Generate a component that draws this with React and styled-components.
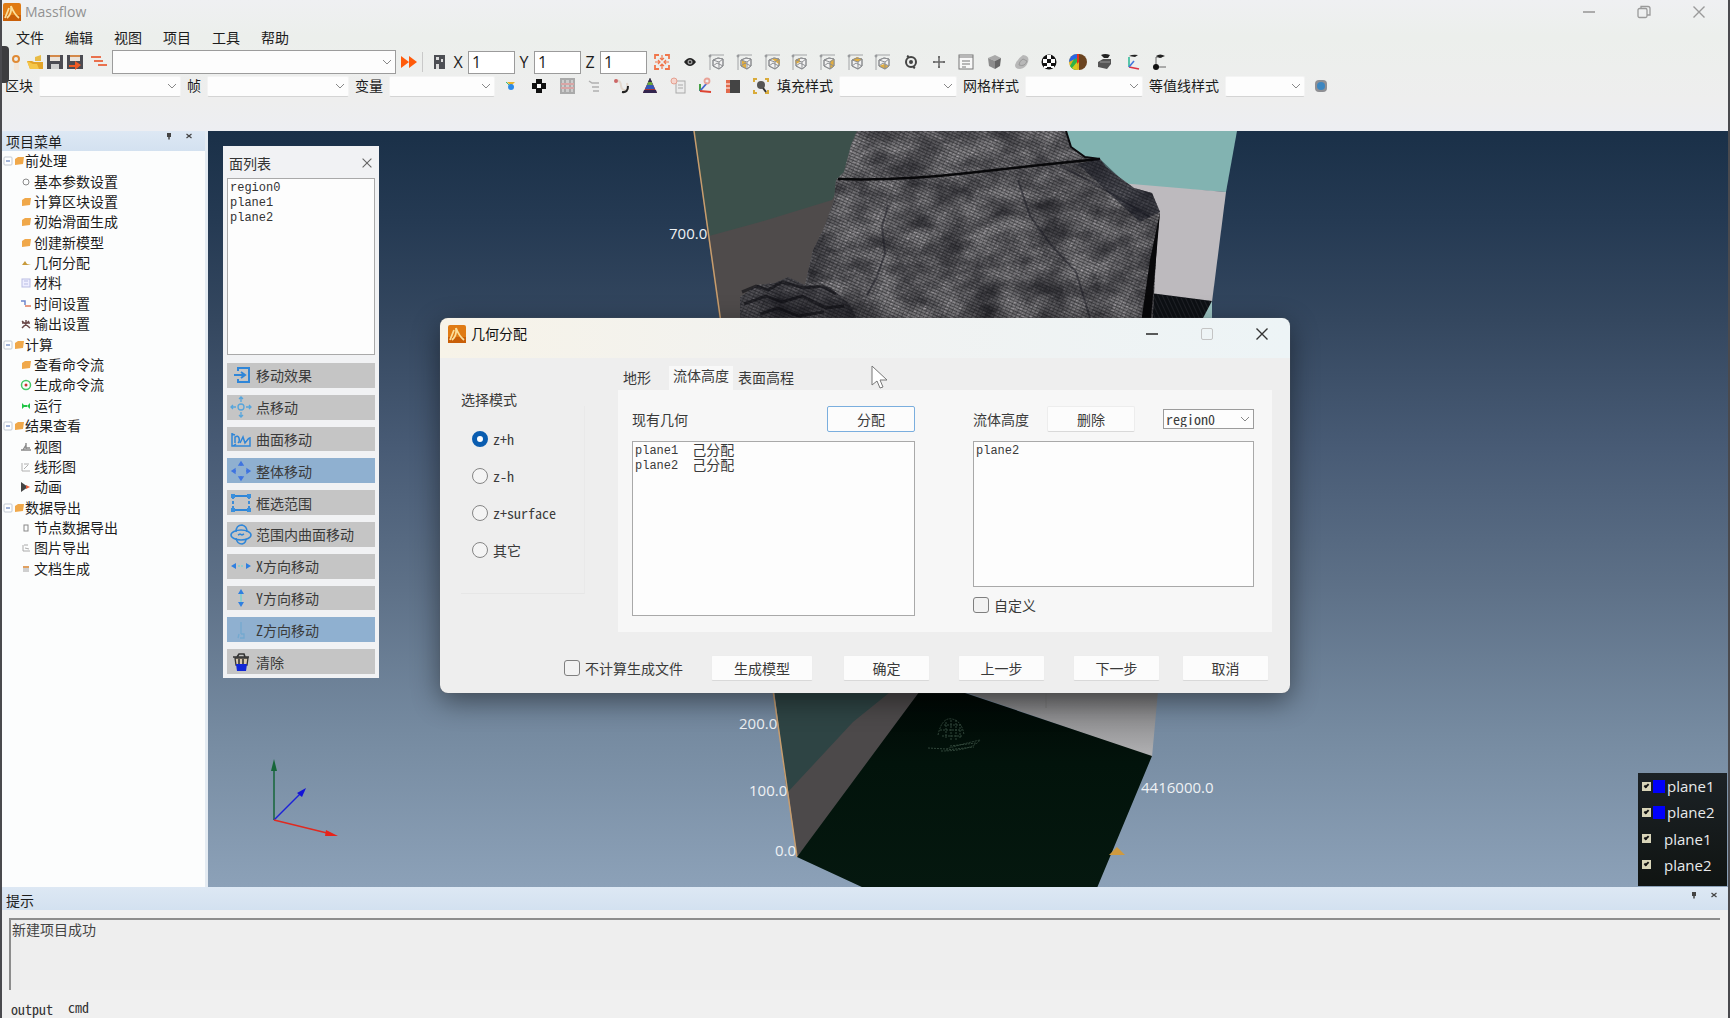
import React, { useState } from "react";
import styled, { createGlobalStyle, css } from "styled-components";

const sans = `"Open Sans", "Noto Sans CJK SC", sans-serif`;
const mono = `"Noto Sans Mono CJK SC", "Noto Sans CJK SC", monospace`;
const latinMono = `"Liberation Mono", "Noto Sans CJK SC", monospace`;

const GlobalStyle = createGlobalStyle`
  *, *::before, *::after { box-sizing: border-box; }
  body { margin: 0; background: #eeeeee; font-family: ${sans}; font-size: 14px; color: #1c1c1c; }
  button, input, select, textarea { font: inherit; color: inherit; margin: 0; }
  ul { list-style: none; margin: 0; padding: 0; }
  svg { display: block; flex: none; }
`;

/* ---------- window frame ---------- */

const Window = styled.div`
  position: relative;
  display: flex;
  flex-direction: column;
  height: 100vh;
  border: solid #4a4a4e;
  border-width: 0 2px 0 2px;
  background: linear-gradient(#eff0f2 0, #ecefec 36px, #eeeeee 100px, #edeef2 131px);
  overflow: hidden;
`;

const EdgeHandle = styled.div`
  position: absolute;
  left: -2px;
  top: 46px;
  width: 9px;
  height: 37px;
  border-radius: 0 4px 4px 0;
  background: #3d3d3f;
`;

const TitleBar = styled.header`
  display: flex;
  align-items: center;
  justify-content: space-between;
  height: 24px;
  padding: 0 19px 1px 1px;
`;

const Brand = styled.h1`
  display: flex;
  align-items: center;
  gap: 4px;
  margin: 0;
  font-size: 14px;
  font-weight: 400;
  line-height: 20px;
  color: #929292;
`;

const Controls = styled.div`
  display: flex;
  align-items: center;
  gap: ${(p) => p.$gap}px;
  color: ${(p) => p.$color};
`;

const PlainButton = styled.button`
  display: flex;
  align-items: center;
  justify-content: center;
  width: ${(p) => p.$size || 20}px;
  height: ${(p) => p.$size || 20}px;
  flex: none;
  padding: 0;
  border: 0;
  background: none;
`;

const MenuBar = styled.nav`
  display: flex;
  align-items: center;
  gap: 21px;
  height: 26px;
  padding: 2px 0 0 14px;
`;

const MenuLink = styled.button`
  padding: 0;
  border: 0;
  background: none;
  line-height: 20px;
`;

const ToolRow = styled.div`
  display: flex;
  align-items: center;
  gap: ${(p) => p.$gap}px;
  height: 24px;
  padding-left: 3px;
  white-space: nowrap;
`;

const FileTools = styled.div`
  display: flex;
  & > :last-child { margin: 0 0 0 4px; }
`;

const IconStrip = styled.div`
  display: flex;
  justify-content: space-between;
  width: ${(p) => p.$width}px;
  margin-left: ${(p) => p.$indent || 0}px;
`;

const Separator = styled.span`
  width: 1px;
  height: 20px;
  margin-right: 3px;
  background: #c9c9c9;
`;

const AxisField = styled.label`
  display: flex;
  align-items: center;
  gap: 4px;
  font-size: 16px;
  & > span { width: 12px; text-align: center; }
`;

const AxisInput = styled.input`
  width: 47px;
  height: 23px;
  padding: 0 3px;
  border: 1px solid #9b9b9b;
  background: #fff;
`;

const ToolField = styled.label`
  display: flex;
  align-items: center;
  gap: 6px;
  line-height: 20px;
`;

const SelectBox = styled.span`
  display: inline-grid;
  align-items: center;
  width: ${(p) => p.$width}px;
  & > * { grid-area: 1 / 1; }
  & > svg { justify-self: end; margin-right: 4px; pointer-events: none; }
`;

const Select = styled.select`
  appearance: none;
  width: 100%;
  height: ${(p) => p.$height}px;
  padding: 0 2px;
  border: 1px solid ${(p) => (p.$bordered ? "#9c9c9c" : "#f4f4f4")};
  border-bottom-color: ${(p) => (p.$bordered ? "#9c9c9c" : "#d4d4d4")};
  border-radius: ${(p) => (p.$bordered ? 0 : 2)}px;
  background: #fdfdfd;
  line-height: 16px;
`;

/* ---------- docked panels ---------- */

const Workspace = styled.div`
  display: flex;
  flex: 1;
  min-height: 0;
  margin-top: 33px;
`;

const Sidebar = styled.aside`
  width: 206px;
  flex: none;
  border-right: 3px solid #e4ebf2;
  background: #fcfdfd;
`;

const DockHeader = styled.div`
  display: flex;
  justify-content: space-between;
  align-items: flex-end;
  height: ${(p) => p.$height}px;
  padding: 0 ${(p) => p.$right}px 0 4px;
  background: linear-gradient(#dde8f4, #d3e1f0);
  & h2 { margin: 0; font-size: 14px; font-weight: 400; line-height: 18px; }
`;

const DockTools = styled.div`
  display: flex;
  align-self: flex-start;
  gap: 10px;
  padding-top: ${(p) => p.$top || 0}px;
  color: #333;
`;

const Tree = styled.ul`
  display: grid;
  grid-auto-rows: 1fr;
  height: 428px;
`;

const TreeRow = styled.li`
  display: flex;
  align-items: center;
  gap: ${(p) => (p.$root ? 0 : 2)}px;
  padding-left: ${(p) => (p.$root ? 1 : 18)}px;
  line-height: 20px;
  white-space: nowrap;
`;

const Viewport = styled.main`
  position: relative;
  flex: 1;
  min-width: 0;
  background: linear-gradient(#1a3048, #253a53 12%, #34475f 25%, #485b75 42%, #5d7087 60%, #768ba1 80%, #8ca1b8);
  overflow: hidden;
`;

const Scene = styled.svg`
  width: 100%;
  height: 100%;
  font-family: ${sans};
  font-size: 15px;
`;

const BottomDock = styled.section`
  display: flex;
  flex-direction: column;
  height: 131px;
  flex: none;
  background: #f0f0f0;
`;

const Console = styled.textarea`
  height: 72px;
  margin: 8px 8px 0 7px;
  padding: 0 1px;
  border: solid #8c8c8c;
  border-width: 2px 0 0 2px;
  border-radius: 0;
  background: #eeeeee;
  color: #444;
  font-family: ${mono};
  line-height: 18px;
  resize: none;
`;

const ConsoleTabs = styled.div`
  display: flex;
  gap: 15px;
  padding: 8px 0 0 9px;
  font-family: ${mono};
`;

const ConsoleTab = styled.button`
  height: 20px;
  padding: ${(p) => (p.$active ? "2px 0 0" : "0 0 2px")};
  border: 0;
  background: none;
  color: #333;
  line-height: 18px;
`;

/* ---------- floating face list ---------- */

const FacePanel = styled.section`
  position: absolute;
  left: 15px;
  top: 15px;
  width: 156px;
  padding: 0 4px 4px;
  background: #f1f2f4;
  font-family: ${mono};
  color: #333;
`;

const FaceHeader = styled.div`
  display: flex;
  align-items: center;
  justify-content: space-between;
  height: 32px;
  padding: 2px 0 0 2px;
  & svg { width: 16px; height: 16px; color: #666; }
  & button { width: 16px; }
`;

const ListBox = styled.ul`
  height: ${(p) => p.$height}px;
  padding: 2px;
  border: 1px solid #a9a9a9;
  background: #fdfdfd;
  font-family: ${latinMono};
  font-size: 12px;
  line-height: 15px;
  & li { display: flex; gap: 14px; height: 15px; }
`;

const Assigned = styled.span`
  font-size: 14px;
`;

const MoveTools = styled.div`
  display: grid;
  grid-auto-rows: 1fr;
  gap: 7px;
  height: 311px;
  margin-top: 8px;
`;

const MoveButton = styled.button`
  display: flex;
  align-items: center;
  gap: 4px;
  padding: 0 0 0 3px;
  border: 0;
  background: ${(p) => (p.$on ? "#8fb0d0" : "#c5c5c5")};
  color: #3a3a3a;
  line-height: 20px;
`;

/* ---------- legend ---------- */

const Legend = styled.div`
  position: absolute;
  right: 1px;
  bottom: 1px;
  display: grid;
  grid-auto-rows: 1fr;
  width: 89px;
  height: 113px;
  padding: 0 0 8px 4px;
  background: linear-gradient(#1c2226, #101412);
  color: #e8eaec;
  font-size: 15px;
`;

const LegendRow = styled.label`
  display: flex;
  align-items: center;
  gap: ${(p) => (p.$swatch ? 2 : 13)}px;
`;

const LegendCheck = styled.input`
  appearance: none;
  display: grid;
  width: 9px;
  height: 9px;
  background: #d8d4b8;
  &:checked::after {
    content: "";
    width: 5px;
    height: 3px;
    margin: 2px;
    border: solid #111;
    border-width: 0 0 2px 2px;
    rotate: -45deg;
  }
`;

const Swatch = styled.span`
  width: 12px;
  height: 13px;
  background: #0000fb;
`;

/* ---------- dialog ---------- */

const Dialog = styled.section`
  position: absolute;
  left: 232px;
  top: 187px;
  width: 850px;
  height: 375px;
  border-radius: 8px;
  background: linear-gradient(90deg, #f7f3e8, #f1f2f1 45%, #edf4f6) top / 100% 40px no-repeat, #eeeeee;
  box-shadow: 0 8px 28px rgba(0, 0, 0, 0.45), 0 0 1px #777;
  font-family: ${mono};
  color: #3a3a3a;
  line-height: 20px;
`;

const DialogHeader = styled.header`
  display: flex;
  align-items: center;
  justify-content: space-between;
  height: 32px;
  padding: 0 18px 0 8px;
  font-family: ${sans};
  & h2 { display: flex; align-items: center; gap: 5px; margin: 0; font-size: 14px; font-weight: 400; color: #111; }
`;

const DialogBody = styled.div`
  display: flex;
  gap: 33px;
  height: 282px;
  padding: 16px 18px 0 21px;
`;

const ModeGroup = styled.fieldset`
  width: 124px;
  height: 188px;
  margin: 40px 0 0;
  padding: 0 0 0 11px;
  border: 0;
  border-right: 1px solid #e9e9e9;
  border-bottom: 1px solid #e6e6e6;
  & legend { float: left; width: 100%; margin: -17px 0 11px -11px; padding: 0; }
`;

const ModeOption = styled.label`
  display: flex;
  align-items: center;
  gap: 5px;
  height: 37px;
  clear: both;
`;

const Radio = styled.input`
  appearance: none;
  width: 16px;
  height: 16px;
  border: 1px solid #858585;
  border-radius: 50%;
  background: #f4f4f4;
  &:checked { border: 5px solid #0a5db0; background: #fff; }
`;

const Tabs = styled.div`
  flex: 1;
`;

const TabList = styled.div`
  display: flex;
  align-items: flex-end;
  height: 24px;
`;

const Tab = styled.button`
  height: 24px;
  padding: ${(p) => (p.$active ? "0 4px 6px" : "0 5px 2px")};
  margin-right: ${(p) => (p.$wide ? 13 : 0)}px;
  border: 0;
  background: ${(p) => (p.$active ? "#f8f8f8" : "none")};
  line-height: 18px;
`;

const TabPanel = styled.div`
  display: flex;
  justify-content: space-between;
  height: 242px;
  padding: 16px 18px 0 14px;
  background: #f7f7f7;
`;

const Column = styled.div`
  width: ${(p) => p.$width}px;
`;

const ColumnHead = styled.div`
  display: flex;
  align-items: center;
  justify-content: space-between;
  height: 26px;
  margin-bottom: 9px;
`;

const HeadGroup = styled.div`
  display: flex;
  align-items: center;
  gap: 18px;
`;

const PushButton = styled.button`
  width: ${(p) => p.$width || 88}px;
  height: 26px;
  padding: 0;
  border: 1px solid #ededed;
  border-bottom-color: #d9d9d9;
  border-radius: 2px;
  background: #fcfcfc;
  ${(p) => p.$focus && css`border-color: #7aaede;`}
`;

const CheckField = styled.label`
  display: flex;
  align-items: center;
  gap: 5px;
  margin-top: ${(p) => p.$top || 0}px;
`;

const Check = styled.input`
  appearance: none;
  width: 16px;
  height: 16px;
  border: 1px solid #7f7f7f;
  border-radius: 3px;
  background: #f2f2f2;
`;

const DialogFooter = styled.footer`
  display: flex;
  align-items: center;
  justify-content: space-between;
  margin: 23px 21px 0 124px;
`;

const ButtonGroup = styled.div`
  display: flex;
  gap: ${(p) => p.$gap}px;
`;

const Pointer = styled.svg`
  position: absolute;
  left: 663px;
  top: 234px;
`;

/* ---------- drawings ---------- */

const Logo = () => (
  <svg width="18" height="18" viewBox="0 0 18 18">
    <rect width="18" height="18" rx="2" fill="#e07b14" />
    <rect y="12" width="18" height="6" fill="#c95f08" />
    <path d="M2 15L6 5M8 3q1 8-4 12M8 3q3 8 8 12" fill="none" stroke="#fbdf9a" strokeWidth="1.800" />
  </svg>
);

const Chevron = () => (
  <svg width="10" height="10" viewBox="0 0 10 10" fill="none" stroke="#888">
    <path d="M1 3l4 4 4-4" />
  </svg>
);

const GLYPHS = {
  min: <path d="M4 10h12" stroke="currentColor" strokeWidth="1.6" />,
  restore: <g fill="none" stroke="currentColor" strokeWidth="1.3"><rect x="4" y="6.500" width="9" height="9" rx="1.500" /><path d="M7 6V4.500h7a2 2 0 0 1 2 2V13h-3" /></g>,
  max: <rect x="4.500" y="4.500" width="11" height="11" rx="1.500" fill="none" stroke="#c4c4c4" />,
  close: <path d="M4.500 4.500l11 11M15.500 4.500l-11 11" stroke="currentColor" strokeWidth="1.4" />,
  pin: <g fill="#444"><rect x="6" y="4" width="8" height="8" /><path d="M10 11v6" stroke="#444" strokeWidth="3" /></g>,
  smallClose: <path d="M5 6l10 8M15 6L5 14" stroke="#444" strokeWidth="2.500" />,
  newFile: <g><path d="M9 9h5v9H9z" fill="#f3e6d8" /><circle cx="11" cy="7" r="3" fill="none" stroke="#e08a35" strokeWidth="2" /></g>,
  open: <g><path d="M10 5l6-2v6h-6z" fill="#e8bb45" /><path d="M2 9h5l2 1h9v7H5z" fill="#e3a428" /><path d="M2 9l3 8h9l-2-5H8z" fill="#f5c749" /></g>,
  save: <g><path d="M2 3h16v14H2z" fill="#4b4b52" /><path d="M5 3h10v6H5z" fill="#e9e2da" /><path d="M5 3h10v2H5z" fill="#d4894a" /><path d="M6 12h8v5H6z" fill="#cfcfcf" /></g>,
  saveAs: <g><path d="M2 3h16v14H2z" fill="#4b4b52" /><path d="M5 3h10v6H5z" fill="#e9e2da" /><path d="M5 3h10v2H5z" fill="#d4894a" /><path d="M4 13h6V9l6 4-6 5v-3H4z" fill="#ee5a24" /></g>,
  gantt: <path d="M2 5h10M5 9h9M9 13h9" stroke="#e9714e" strokeWidth="2.200" />,
  forward: <path d="M2 4l8 6-8 6zM10 4l8 6-8 6z" fill="#ff5a0a" />,
  save3d: <g><path d="M5 3h11v14H5z" fill="#4c4e53" /><path d="M7 5h3v3H7zM7 12h3v5H7zM12 7h2v3h-2z" fill="#ddd" /></g>,
  expand: <g fill="none" stroke="#f0764b" strokeWidth="1.800"><path d="M3 7V3h4M13 3h4v4M17 13v4h-4M7 17H3v-4" /><path d="M10 3v5M10 12v5M3 10h5M12 10h5M8 6l2 2 2-2M8 14l2-2 2 2M6 8l2 2-2 2M14 8l-2 2 2 2" strokeWidth="1.200" /></g>,
  eye: <g><path d="M4 10q6-8 12 0-6 8-12 0z" fill="#222" /><circle cx="10" cy="10" r="2.500" fill="#999" /><circle cx="10" cy="10" r="1" fill="#111" /></g>,
  target: <g fill="none" stroke="#444" strokeWidth="2"><circle cx="10" cy="10" r="5" /><circle cx="10" cy="10" r="1" /><path d="M6 4l2 1M14 16l-2-1" /></g>,
  plus: <path d="M10 4v12M4 10h12M9 5h2M9 15h2M5 9v2M15 9v2" fill="none" stroke="#666" strokeWidth="1.500" />,
  form: <g fill="#f8f8f8" stroke="#777"><rect x="3" y="3" width="14" height="14" /><path d="M3 5h14M6 9h8M6 12h8M6 15h4" /></g>,
  cube: <g><path d="M4 6l7-3 6 3-6 3z" fill="#aaa" /><path d="M4 6l7 3v8l-6-3z" fill="#8c8c8c" /><path d="M11 9l6-3-1 8-5 3z" fill="#666" /></g>,
  blob: <g><path d="M3 13q2-6 8-10 7 1 5 7-2 6-8 7-5 0-5-4z" fill="#b8b8b8" /><path d="M7 13q0-4 4-6l4 2q-2 6-8 4" fill="none" stroke="#999" /></g>,
  checker: <g><circle cx="10" cy="10" r="7.500" fill="#111" /><path d="M8 3h4v4H8zM4 7h4v4H4zM12 7h4v4h-4zM8 11h4v4H8zM5 14h3v2H5zM12 14h3v2h-3z" fill="#fff" /></g>,
  sphere: <g><circle cx="10" cy="10" r="8" fill="#e0b21c" /><path d="M10 2v16a8 8 0 0 1-7-4z" fill="#2cb34a" /><path d="M2 10a8 8 0 0 1 8-8v4z" fill="#2a65e6" /><path d="M5 16a8 8 0 0 0 5 2V10z" fill="#d8c820" /><path d="M12 2a8 8 0 0 1 0 16z" fill="#6b4420" /><path d="M10 2h2v8l-2 2z" fill="#e3321c" /></g>,
  press: <g fill="#555"><path d="M6 3q4-2 9 0l-2 3H9z" fill="#222" /><path d="M3 10l5-3h8v5l-4 5-9-2z" /><path d="M5 10h10" stroke="#999" /></g>,
  axes: <g fill="none" strokeWidth="1.600"><path d="M7 15V5" stroke="#3b9" /><path d="M7 15l10 2" stroke="#d34" /><path d="M7 15l5-6" stroke="#47d" /><path d="M7 4q4-2 9-1l-3 2z" fill="#222" /></g>,
  probe: <g><path d="M6 14V5h6M6 15h10" fill="none" stroke="#666" /><circle cx="6" cy="15" r="3" fill="#111" /><path d="M6 4q4-3 9 0l-5 2z" fill="#222" /></g>,
  spot: <g><path d="M6 6h8l-4 4z" fill="#e8b32c" /><circle cx="10" cy="11" r="3" fill="#2d8be8" /><path d="M5 6l3 3" stroke="#3b8" /></g>,
  diamonds: <g fill="#111"><path d="M7 3h6v5H7zM7 12h6v5H7zM3 7h5v6H3zM12 7h5v6h-5z" /><path d="M8 8h4v4H8z" fill="#fff" /></g>,
  mesh: <g fill="none" stroke="#aaa" strokeWidth="2"><rect x="4" y="3" width="13" height="14" fill="#ccc" /><path d="M8 3v14M13 3v14" /><path d="M4 8h13M4 12h13" stroke="#d9a5a5" /></g>,
  stream: <path d="M5 5l3 2h7M8 11h7M9 15h6" fill="none" stroke="#b0b0b0" strokeWidth="1.500" />,
  orbit: <g fill="none" strokeWidth="2"><path d="M3 4q6 0 6 6 1 6 7 3l-1-6" stroke="#e3d8ce" /><path d="M10 16q6 1 6-6" stroke="#222" /><circle cx="4" cy="5" r="1" stroke="#c66" /></g>,
  pyramid: <g><path d="M10 2L3 17h14z" fill="#a33" /><path d="M10 2L5 13h10z" fill="#3556b8" /><path d="M10 2L7 9h6z" fill="#6aa53a" /><path d="M10 2L8 6h4zM3 17h14l-1-3H4z" fill="#33254e" /></g>,
  paste: <g fill="#ececec" stroke="#aaa"><rect x="8" y="5" width="9" height="12" /><path d="M10 9h5M10 12h5" /><circle cx="6" cy="5" r="3" fill="#f5d4cc" stroke="#e5a090" /></g>,
  axis3: <g fill="none" strokeWidth="1.800"><path d="M5 8v7" stroke="#393" /><path d="M5 15l7-8" stroke="#46c" /><path d="M5 15l11 1" stroke="#d43" /><circle cx="12" cy="5" r="2.500" stroke="#e9a296" /></g>,
  film: <g><rect x="4" y="4" width="13" height="13" fill="#444" /><rect x="3" y="4" width="4" height="13" fill="#e26a4c" /><path d="M3 8h4M3 12h4" stroke="#fff" /></g>,
  focus: <g fill="none"><path d="M3 6V3h3M14 3h3v3M17 14v3h-3M6 17H3v-3" stroke="#d9ab3a" strokeWidth="2" /><circle cx="10" cy="9" r="4" fill="#555" /><path d="M12 12l3 4" stroke="#333" strokeWidth="2" /></g>,
  globe: <g><rect x="4" y="4" width="12" height="12" rx="4" fill="#8f8f93" /><circle cx="10" cy="10" r="4" fill="#3c86c0" /></g>,
};

const Glyph = ({ name, size = 20 }) => (
  <svg width={size} height={size} viewBox="0 0 20 20" aria-hidden="true">{GLYPHS[name]}</svg>
);

const VIEW_FACES = ["", "M7 8l4 2v7l-4-3z", "M9 7l4-1 4 2v5l-4-3z", "M5 8l5-2v4l-4 2z", "M12 9l4-2v7l-4 3z", "M6 8l5-3 5 2-4 3z", "M6 14l5-2 5 2-4 3z"];

const ViewCube = ({ face }) => (
  <svg width="20" height="20" viewBox="0 0 20 20" fill="none" stroke="#8d8f92" aria-hidden="true">
    <path d="M3 18V3h14" stroke="#a2a4a6" />
    <path d="M6 8l5-2 5 1v7l-4 3-6-3z" fill="#f2f2f2" />
    <path d={VIEW_FACES[face] || "M0 0"} fill="#e3ae3f" stroke="none" />
    <path d="M6 8l5-2 5 1v7l-4 3-6-3zM6 8l6 2 4-3M12 10v7M6 14l4-3 6 3" />
    <circle cx="3" cy="4" r="1" />
  </svg>
);

const TREE_GLYPHS = {
  folder: <path d="M2 5l3-2h6l-1 7-8 1z" fill="#f0a84a" />,
  ring: <circle cx="6" cy="7" r="3" fill="none" stroke="#8a8a8a" />,
  cone: <path d="M2 9l3-4 2 3 4 1z" fill="#c79a3a" />,
  doc: <g fill="#eef" stroke="#b9bde3"><rect x="2" y="3" width="8" height="8" /><path d="M4 5h4M4 8h4" /></g>,
  step: <g fill="none" strokeWidth="1.500"><path d="M1 4h4v4" stroke="#6d86cc" /><path d="M5 9h6" stroke="#e07a5a" /></g>,
  tools: <path d="M2 4l8 7M9 4l-7 7M2 6h8M6 3v4" stroke="#6b4a4a" strokeWidth="1.500" />,
  gear: <g fill="none"><circle cx="6" cy="7" r="4.500" stroke="#47c765" strokeWidth="1.500" /><circle cx="6" cy="7" r="1.500" fill="#c33" /></g>,
  run: <path d="M2 4l3 3-3 3zM10 4L7 7l3 3zM4 6h4v2H4z" fill="#22c546" />,
  view: <path d="M1 10h10M3 10l3-5M6 9V3M6 8h4" stroke="#888" fill="none" strokeWidth="1.400" />,
  chart: <g fill="none" stroke="#b0b0b0"><path d="M2 3v8h8M4 9l4-4M4 4h5" /></g>,
  play: <g><path d="M1 2l7 5-7 5z" fill="#444" /><path d="M6 5l4 2-4 2z" fill="#e2603c" /></g>,
  box: <rect x="4" y="4" width="4" height="6" fill="none" stroke="#888" />,
  pic: <g fill="none" stroke="#aaa"><path d="M3 4v6h7M5 7l4 1M4 4h4" /></g>,
  note: <g><rect x="3" y="4" width="6" height="2" fill="#e0a060" /><rect x="3" y="6" width="6" height="4" fill="#cfcfcf" /></g>,
};

const TreeGlyph = ({ name }) => (
  <svg width="12" height="14" viewBox="0 0 12 14" aria-hidden="true">{TREE_GLYPHS[name]}</svg>
);

const Expander = () => (
  <svg width="10" height="10" viewBox="0 0 10 10" aria-hidden="true">
    <rect x="1" y="1" width="8" height="8" rx="1" fill="#fff" stroke="#c3c9d2" />
    <path d="M3 5h4" stroke="#4668b0" />
  </svg>
);

const MOVE_GLYPHS = {
  effect: <g strokeWidth="2"><path d="M8 7V4h11v14H8v-3M4 11h10M11 8l4 3-4 3" /></g>,
  point: <g stroke="#56a5dc"><circle cx="11" cy="11" r="3" /><path d="M11 1v5M9 3l2-2 2 2M11 16v5M9 19l2 2 2-2M1 11h5M3 9l-2 2 2 2M16 11h5M19 9l2 2-2 2" /></g>,
  curve: <g strokeWidth="1.500"><path d="M2 5v13h18V9M2 6l3 1M5 15V9q3-2 4 1t-1 5M10 15l3-6 2 6 4-5M3 18l3-2" /></g>,
  whole: <g stroke="#3f74e0"><path d="M11 3v3M9 5l2-3 2 3zM11 16v3M9 17l2 3 2-3zM3 11h3M5 9l-3 2 3 2zM16 11h3M17 9l3 2-3 2z" /></g>,
  frame: <g strokeWidth="1.800"><path d="M3 4h16M3 18h16" /><path d="M3 4v14M19 4v14" strokeDasharray="3 2" /><path d="M1 2h4v4H1zM17 2h4v4h-4zM1 16h4v4H1zM17 16h4v4h-4z" fill="#3a8fdc" stroke="none" /></g>,
  range: <g strokeWidth="1.500"><ellipse cx="11" cy="12" rx="10" ry="5" /><path d="M6 9q0-7 6-7 5 1 5 7M6 15q1 6 6 6 4-1 4-5M8 12l2-1 2 1 2-1" /></g>,
  x: <g strokeWidth="1.600"><path d="M8 11h6" stroke="#7fd0d0" strokeDasharray="2 1" /><path d="M1 11l5-3v6zM21 11l-5-3v6z" fill="#2f7fe0" stroke="none" /></g>,
  y: <g strokeWidth="1.600"><path d="M11 7v8" stroke="#7fd0d0" /><path d="M11 2l3 5H8zM11 20l3-5H8z" fill="#2f7fe0" stroke="none" /></g>,
  z: <g stroke="#74a9cf"><path d="M11 3v12M9 15l-1 4M11 15h3v4h-4" /></g>,
  clear: <g><path d="M5 7h13l-1 7H6z" fill="#d8c7ae" stroke="#333" /><path d="M6 13h11l-1 7H7z" fill="#1126d8" stroke="none" /><path d="M3 6h16M7 6l2-3h5l1 3M9 8v5M13 8v5" stroke="#333" strokeWidth="1.600" /></g>,
};

const MoveGlyph = ({ name }) => (
  <svg width="22" height="22" viewBox="0 0 22 22" fill="none" stroke="#2f86d8" strokeWidth="1.300" aria-hidden="true">
    {MOVE_GLYPHS[name]}
  </svg>
);

const TERRAIN =
  "M857 131H1066L1071 147 1085 157 1100 159 1106 167 1119 177 1134 188 1152 193 1160 212 1157 240 1152 330H740V297L757 285 775 283 788 277 805 285 813 250 824 228 834 200 836 180 844 172 851 145Z";

const SceneDrawing = () => (
  <Scene viewBox="208 131 1520 756" preserveAspectRatio="xMidYMid slice" role="img" aria-label="三维地形视图">
    <defs>
      <pattern id="mesh" width="4" height="3" patternUnits="userSpaceOnUse" patternTransform="rotate(24)">
        <path d="M0 0h4" stroke="#121215" strokeWidth="1.400" fill="none" />
        <path d="M0 0v3" stroke="#121215" strokeWidth="0.800" fill="none" />
      </pattern>
      <pattern id="darkMesh" width="4" height="4" patternUnits="userSpaceOnUse" patternTransform="rotate(-25)">
        <path d="M0 0v4" stroke="#303238" />
      </pattern>
      <filter id="rock" x="0" y="0" width="100%" height="100%" colorInterpolationFilters="sRGB">
        <feTurbulence type="fractalNoise" baseFrequency="0.03 0.05" numOctaves="6" seed="11" />
        <feColorMatrix values="0 0 0 0 0.08  0 0 0 0 0.08  0 0 0 0 0.1  1.600 0 0 0 -0.450" />
        <feComposite in2="SourceGraphic" operator="in" />
      </filter>
      <filter id="grain" x="0" y="0" width="100%" height="100%" colorInterpolationFilters="sRGB">
        <feTurbulence type="fractalNoise" baseFrequency="0.3 0.5" numOctaves="2" seed="3" />
        <feColorMatrix values="0 0 0 0 0.75  0 0 0 0 0.73  0 0 0 0 0.75  3 0 0 0 -1.500" />
        <feComposite in2="SourceGraphic" operator="in" />
      </filter>
      <linearGradient id="wall" x1="0" y1="0" x2="0" y2="1">
        <stop offset="0" stopColor="#6c6c6e" />
        <stop offset="1" stopColor="#b2b2b4" />
      </linearGradient>
      <linearGradient id="floor" x1="0" y1="0" x2="0" y2="1">
        <stop offset="0" stopColor="#010604" />
        <stop offset="0.4" stopColor="#02130b" />
        <stop offset="1" stopColor="#05180f" />
      </linearGradient>
    </defs>

    <path d="M694 131H900V340H722Z" fill="#4f4b4b" />
    <path d="M694 131H870L832 200 760 222 709 236Z" fill="#3c504b" />
    <path d="M773 680H940L797 857Z" fill="#4c494a" />
    <path d="M773 680H905L853 722 787 793Z" fill="#2e4444" />
    <path d="M694 131L722 330M773 690L797 857" stroke="#c79d6e" strokeWidth="1.500" />

    <path d="M1055 131H1237L1226 192 1100 184Z" fill="#82b3b1" />
    <path d="M1120 183L1226 192 1212 302 1145 293Z" fill="#bdbabe" />
    <path d="M1150 293L1212 301 1200 330H1145Z" fill="#0d1014" />
    <path d="M1150 293L1212 301 1200 330H1145Z" fill="url(#darkMesh)" />
    <path d="M1212 301L1202 320H1212Z" fill="#9cc4c2" />

    <path d={TERRAIN} fill="#7c7b7e" />
    <path d={TERRAIN} fill="#fff" filter="url(#grain)" opacity="0.700" />
    <path d={TERRAIN} fill="url(#mesh)" opacity="0.700" />
    <path d={TERRAIN} fill="#000" filter="url(#rock)" opacity="0.800" />
    <path d="M740 297L757 285 775 283 788 277 805 285 830 287 850 305 862 330H740Z" fill="#101016" opacity="0.450" />
    <path d="M742 292l14-6 12 4 14-8 22 6 18-2 14 8M744 304l22-8 16 6 20-6 24 12 18-2M760 314l18-6 20 8 26-4" fill="none" stroke="#0c0c10" strokeWidth="3" opacity="0.600" />
    <path d="M888 205l-6 22 3 26-8 24-10 18M1018 180l12 36 22 30 24 26 14 46M1060 165l40 22 50 30" fill="none" stroke="#16161e" strokeWidth="2" opacity="0.450" />
    <path d="M838 179q60 2 130-6t132-14" fill="none" stroke="#08080a" strokeWidth="2.500" />
    <path d="M1066 131L1071 147 1085 157 1100 159" fill="none" stroke="#0b0b0e" strokeWidth="2" />
    <path d="M1078 164L1100 159 1119 177 1134 188 1152 193 1160 212 1140 222 1112 196Z" fill="#10121c" opacity="0.500" />
    <path d="M1160 212L1150 330H1140L1150 260Z" fill="#08080a" />

    <path d="M930 680H1159L1152 757Z" fill="url(#wall)" />
    <path d="M1046 690v18" stroke="#777" />
    <path d="M928 680L797 857 864 888H1097L1152 756 965 693 940 680Z" fill="url(#floor)" />
    <g fill="none" stroke="#31463a" strokeDasharray="2 1">
      <path d="M938 735q4-18 14-16t12 16M940 730h22M942 736h20M944 725h16M946 722v16M951 720v20M956 720v20M960 724v14" />
      <path d="M928 748l18 1q16-5 34-9-8 11-40 11M950 746l26-3M946 750l28-3" />
    </g>
    <path d="M1109 855L1117 847 1125 855Z" fill="#cf9a3f" />

    <g fill="#eef1f4">
      <text x="669" y="239">700.0</text>
      <text x="739" y="729">200.0</text>
      <text x="749" y="796">100.0</text>
      <text x="775" y="856">0.0</text>
      <text x="1141" y="793">4416000.0</text>
    </g>

    <g strokeWidth="1.500">
      <path d="M274 820V766" stroke="#16663a" />
      <path d="M274 759l3 12h-6z" fill="#16663a" />
      <path d="M274 820L300 794" stroke="#1c22d8" />
      <path d="M306 788l-4 9-5-4z" fill="#1212d8" />
      <path d="M274 820L327 833" stroke="#e02a20" />
      <path d="M338 836l-13 0 1-6z" fill="#e8231a" />
    </g>
  </Scene>
);

/* ---------- content ---------- */

const TREE = [
  ["前处理"],
  ["基本参数设置", "ring"],
  ["计算区块设置", "folder"],
  ["初始滑面生成", "folder"],
  ["创建新模型", "folder"],
  ["几何分配", "cone"],
  ["材料", "doc"],
  ["时间设置", "step"],
  ["输出设置", "tools"],
  ["计算"],
  ["查看命令流", "folder"],
  ["生成命令流", "gear"],
  ["运行", "run"],
  ["结果查看"],
  ["视图", "view"],
  ["线形图", "chart"],
  ["动画", "play"],
  ["数据导出"],
  ["节点数据导出", "box"],
  ["图片导出", "pic"],
  ["文档生成", "note"],
];

const MOVES = [
  ["移动效果", "effect"],
  ["点移动", "point"],
  ["曲面移动", "curve"],
  ["整体移动", "whole", true],
  ["框选范围", "frame"],
  ["范围内曲面移动", "range"],
  ["X方向移动", "x"],
  ["Y方向移动", "y"],
  ["Z方向移动", "z", true],
  ["清除", "clear"],
];

const DRAW_TOOLS = ["target", "plus", "form", "cube", "blob", "checker", "sphere", "press", "axes", "probe"];
const PLOT_TOOLS = ["spot", "diamonds", "mesh", "stream", "orbit", "pyramid", "paste", "axis3", "film", "focus"];

const IconButton = ({ name, size }) => (
  <PlainButton type="button" aria-label={name} $size={size}><Glyph name={name} size={size} /></PlainButton>
);

const Combo = ({ label, width, height = 21, bordered, options = [""] }) => (
  <SelectBox $width={width}>
    <Select aria-label={label} $height={height} $bordered={bordered}>
      {options.map((o) => <option key={o}>{o}</option>)}
    </Select>
    <Chevron />
  </SelectBox>
);

const LabeledCombo = ({ label, width }) => (
  <ToolField>{label}<Combo label={label} width={width} /></ToolField>
);

const DockControls = ({ top }) => (
  <DockTools $top={top}>
    <IconButton name="pin" size={10} />
    <IconButton name="smallClose" size={10} />
  </DockTools>
);

export default function App() {
  const [mode, setMode] = useState("z+h");
  return (
    <>
      <GlobalStyle />
      <Window>
        <TitleBar>
          <Brand><Logo />Massflow</Brand>
          <Controls $gap={35} $color="#9a9a9a">
            <IconButton name="min" />
            <IconButton name="restore" />
            <IconButton name="close" />
          </Controls>
        </TitleBar>
        <MenuBar>
          {["文件", "编辑", "视图", "项目", "工具", "帮助"].map((m) => <MenuLink key={m} type="button">{m}</MenuLink>)}
        </MenuBar>
        <ToolRow $gap={3}>
          <FileTools>
            {["newFile", "open", "save", "saveAs", "gantt"].map((n) => <IconButton key={n} name={n} />)}
          </FileTools>
          <Combo label="命令" width={284} height={24} bordered />
          <IconButton name="forward" />
          <Separator />
          <IconButton name="save3d" />
          {["X", "Y", "Z"].map((axis) => (
            <AxisField key={axis}><span>{axis}</span><AxisInput defaultValue="1" /></AxisField>
          ))}
          <IconStrip $width={518} $indent={2}>
            <IconButton name="expand" />
            <IconButton name="eye" />
            {VIEW_FACES.map((_, i) => (
              <PlainButton key={i} type="button" aria-label={`view ${i}`}><ViewCube face={i} /></PlainButton>
            ))}
            {DRAW_TOOLS.map((n) => <IconButton key={n} name={n} />)}
          </IconStrip>
        </ToolRow>
        <ToolRow $gap={6}>
          <LabeledCombo label="区块" width={142} />
          <LabeledCombo label="帧" width={142} />
          <LabeledCombo label="变量" width={106} />
          <IconStrip $width={270}>
            {PLOT_TOOLS.map((n) => <IconButton key={n} name={n} />)}
          </IconStrip>
          <LabeledCombo label="填充样式" width={118} />
          <LabeledCombo label="网格样式" width={118} />
          <LabeledCombo label="等值线样式" width={80} />
          <IconButton name="globe" />
        </ToolRow>
        <EdgeHandle />

        <Workspace>
          <Sidebar>
            <DockHeader $height={20} $right={11}>
              <h2>项目菜单</h2>
              <DockControls />
            </DockHeader>
            <Tree>
              {TREE.map(([text, icon]) => (
                <TreeRow key={text} $root={!icon}>
                  {!icon && <Expander />}
                  <TreeGlyph name={icon || "folder"} />
                  {text}
                </TreeRow>
              ))}
            </Tree>
          </Sidebar>

          <Viewport>
            <SceneDrawing />

            <FacePanel>
              <FaceHeader>
                面列表
                <IconButton name="close" />
              </FaceHeader>
              <ListBox $height={177}>
                <li>region0</li>
                <li>plane1</li>
                <li>plane2</li>
              </ListBox>
              <MoveTools>
                {MOVES.map(([text, icon, on]) => (
                  <MoveButton key={text} type="button" $on={on}><MoveGlyph name={icon} />{text}</MoveButton>
                ))}
              </MoveTools>
            </FacePanel>

            <Legend>
              {[["plane1", true], ["plane2", true], ["plane1", false], ["plane2", false]].map(([name, swatch], i) => (
                <LegendRow key={i} $swatch={swatch}>
                  <LegendCheck type="checkbox" defaultChecked />
                  {swatch && <Swatch />}
                  {name}
                </LegendRow>
              ))}
            </Legend>

            <Dialog role="dialog" aria-label="几何分配">
              <DialogHeader>
                <h2><Logo />几何分配</h2>
                <Controls $gap={35} $color="#333">
                  <IconButton name="min" />
                  <IconButton name="max" />
                  <IconButton name="close" />
                </Controls>
              </DialogHeader>
              <DialogBody>
                <ModeGroup>
                  <legend>选择模式</legend>
                  {["z+h", "z-h", "z+surface", "其它"].map((m) => (
                    <ModeOption key={m}>
                      <Radio type="radio" name="mode" checked={mode === m} onChange={() => setMode(m)} />
                      {m}
                    </ModeOption>
                  ))}
                </ModeGroup>
                <Tabs>
                  <TabList role="tablist">
                    <Tab type="button" role="tab" $wide>地形</Tab>
                    <Tab type="button" role="tab" aria-selected $active>流体高度</Tab>
                    <Tab type="button" role="tab">表面高程</Tab>
                  </TabList>
                  <TabPanel role="tabpanel">
                    <Column $width={283}>
                      <ColumnHead>
                        现有几何
                        <PushButton type="button" $focus>分配</PushButton>
                      </ColumnHead>
                      <ListBox $height={175}>
                        <li>plane1<Assigned>己分配</Assigned></li>
                        <li>plane2<Assigned>己分配</Assigned></li>
                      </ListBox>
                    </Column>
                    <Column $width={281}>
                      <ColumnHead>
                        <HeadGroup>
                          流体高度
                          <PushButton type="button">删除</PushButton>
                        </HeadGroup>
                        <Combo label="区域" width={91} height={20} bordered options={["region0"]} />
                      </ColumnHead>
                      <ListBox $height={146}>
                        <li>plane2</li>
                      </ListBox>
                      <CheckField $top={8}>
                        <Check type="checkbox" />自定义
                      </CheckField>
                    </Column>
                  </TabPanel>
                </Tabs>
              </DialogBody>
              <DialogFooter>
                <ButtonGroup $gap={28}>
                  <CheckField><Check type="checkbox" />不计算生成文件</CheckField>
                  <PushButton type="button" $width={102}>生成模型</PushButton>
                </ButtonGroup>
                <ButtonGroup $gap={22}>
                  <ButtonGroup $gap={28}>
                    {["确定", "上一步", "下一步"].map((t) => (
                      <PushButton key={t} type="button" $width={87}>{t}</PushButton>
                    ))}
                  </ButtonGroup>
                  <PushButton type="button" $width={87}>取消</PushButton>
                </ButtonGroup>
              </DialogFooter>
            </Dialog>

            <Pointer width="18" height="24" viewBox="0 0 18 24">
              <path d="M1 1v19l5-4 3 7 3-1-3-7h7z" fill="#fff" stroke="#777" />
            </Pointer>
          </Viewport>
        </Workspace>

        <BottomDock>
          <DockHeader $height={23} $right={9}>
            <h2>提示</h2>
            <DockControls top={3} />
          </DockHeader>
          <Console aria-label="提示" readOnly value="新建项目成功" />
          <ConsoleTabs>
            <ConsoleTab type="button" $active>output</ConsoleTab>
            <ConsoleTab type="button">cmd</ConsoleTab>
          </ConsoleTabs>
        </BottomDock>
      </Window>
    </>
  );
}
